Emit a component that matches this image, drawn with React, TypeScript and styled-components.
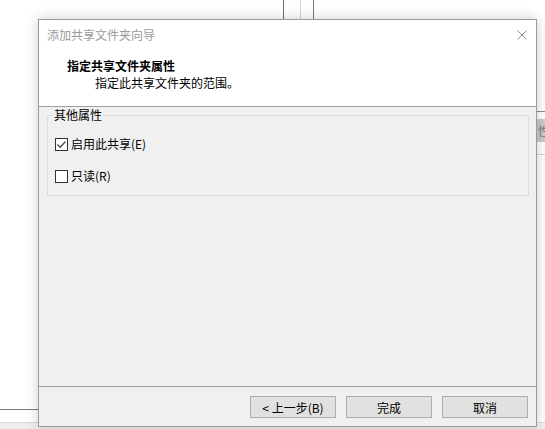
import React from 'react';
import styled, { createGlobalStyle } from 'styled-components';

const GlobalStyle = createGlobalStyle`
  html, body {
    margin: 0;
    padding: 0;
    width: 545px;
    height: 429px;
    overflow: hidden;
    background: #ffffff;
  }
  * {
    box-sizing: border-box;
  }
`;

const FONT = `"Microsoft YaHei UI", "Noto Sans CJK SC", "Noto Sans", sans-serif`;

function CloseIcon(): JSX.Element {
  return (
    <svg width="10" height="10" viewBox="0 0 10 10">
      <path d="M0.5 0.5 L9.5 9.5 M9.5 0.5 L0.5 9.5" stroke="#8a8a8a" strokeWidth="1" fill="none" />
    </svg>
  );
}

function CheckMark(): JSX.Element {
  return (
    <svg width="11" height="11" viewBox="0 0 11 11">
      <path d="M1.5 5.5 L4.2 8.2 L9.5 2.5" stroke="#4a4a4a" strokeWidth="1.3" fill="none" />
    </svg>
  );
}

interface IOptionProps {
  label: string;
  checked?: boolean;
}

function Option({ label, checked }: IOptionProps): JSX.Element {
  return (
    <OptionRow>
      <CheckBox>{checked && <CheckMark />}</CheckBox>
      <OptionLabel>{label}</OptionLabel>
    </OptionRow>
  );
}

function App(): JSX.Element {
  return (
    <Desktop>
      <GlobalStyle />

      {/* window behind the dialog */}
      <TopSplitter $x={283} $tone="#6e6e6e" />
      <TopSplitter $x={300} $tone="#d2d2d2" />
      <TopSplitter $x={313} $tone="#7a7a7a" />
      <LeftRule />
      <BottomStrip />
      <SideRule $y={111} $tone="#8c8c8c" />
      <SideTab>性</SideTab>
      <SideRule $y={154} $tone="#d4d4d4" />

      <Dialog>
        <Header>
          <TitleBar>
            <Title>添加共享文件夹向导</Title>
            <CloseButton>
              <CloseIcon />
            </CloseButton>
          </TitleBar>
          <Heading>指定共享文件夹属性</Heading>
          <SubHeading>指定此共享文件夹的范围。</SubHeading>
        </Header>

        <Body>
          <GroupBox>
            <GroupLegend>其他属性</GroupLegend>
            <OptionList>
              <Option label="启用此共享(E)" checked />
              <Option label="只读(R)" />
            </OptionList>
          </GroupBox>
        </Body>

        <Footer>
          <Button>&lt; 上一步(B)</Button>
          <Button>完成</Button>
          <Button>取消</Button>
        </Footer>
      </Dialog>
    </Desktop>
  );
}

export default App;

const Desktop = styled.div`
  position: relative;
  width: 545px;
  height: 429px;
  overflow: hidden;
  background: #ffffff;
  font-family: ${FONT};
  font-size: 12px;
  color: #000000;
`;

const TopSplitter = styled.div<{ $x: number; $tone: string }>`
  position: absolute;
  top: 0;
  left: ${(p) => p.$x}px;
  width: 1px;
  height: 19px;
  background: ${(p) => p.$tone};
`;

const LeftRule = styled.div`
  position: absolute;
  left: 0;
  top: 409px;
  width: 40px;
  height: 1px;
  background: #7c7c7c;
`;

const BottomStrip = styled.div`
  position: absolute;
  left: 0;
  top: 422px;
  width: 545px;
  height: 7px;
  background: #eeeeee;
  border-top: 1px solid #dadada;
`;

const SideRule = styled.div<{ $y: number; $tone: string }>`
  position: absolute;
  left: 536px;
  top: ${(p) => p.$y}px;
  width: 9px;
  height: 1px;
  background: ${(p) => p.$tone};
`;

const SideTab = styled.div`
  position: absolute;
  left: 536px;
  top: 119px;
  width: 20px;
  height: 23px;
  padding-left: 2px;
  display: flex;
  align-items: center;
  background: #cbcbcb;
  color: #7a7a7a;
  font-size: 12px;
`;

const Dialog = styled.div`
  position: absolute;
  left: 38px;
  top: 19px;
  width: 499px;
  height: 408px;
  display: flex;
  flex-direction: column;
  border: 1px solid #9c9c9c;
  background: #f0f0f0;
  box-shadow: 0 0 12px rgba(0, 0, 0, 0.2);
`;

const Header = styled.div`
  height: 87px;
  flex-shrink: 0;
  background: #ffffff;
  border-bottom: 1px solid #a0a0a0;
`;

const TitleBar = styled.div`
  height: 30px;
  display: flex;
  align-items: center;
  justify-content: space-between;
  padding: 0 9px 0 8px;
`;

const Title = styled.span`
  color: #9a9a9a;
  line-height: 16px;
`;

const CloseButton = styled.div`
  width: 10px;
  height: 10px;
  display: flex;
`;

const Heading = styled.div`
  margin-top: 8px;
  padding-left: 28px;
  line-height: 16px;
  font-weight: bold;
`;

const SubHeading = styled.div`
  margin-top: 1px;
  padding-left: 56px;
  line-height: 16px;
`;

const Body = styled.div`
  flex: 1;
  display: flex;
  flex-direction: column;
`;

const GroupBox = styled.fieldset`
  margin: 1px 7px 0 8px;
  padding: 0;
  border: 1px solid #dcdcdc;
  min-width: 0;
`;

const GroupLegend = styled.legend`
  margin-left: 5px;
  padding: 0 1px;
  line-height: 14px;
  font-size: 12px;
`;

const OptionList = styled.div`
  display: flex;
  flex-direction: column;
  gap: 16px;
  padding: 14px 0 11px 7px;
`;

const OptionRow = styled.div`
  height: 16px;
  display: flex;
  align-items: center;
`;

const CheckBox = styled.span`
  width: 13px;
  height: 13px;
  display: flex;
  align-items: center;
  justify-content: center;
  border: 1px solid #333333;
  background: #ffffff;
`;

const OptionLabel = styled.span`
  margin-left: 3px;
  line-height: 16px;
`;

const Footer = styled.div`
  height: 40px;
  flex-shrink: 0;
  display: flex;
  justify-content: flex-end;
  gap: 10px;
  padding: 9px 8px 8px 0;
  border-top: 1px solid #a0a0a0;
`;

const Button = styled.div`
  width: 86px;
  height: 22px;
  display: flex;
  align-items: center;
  justify-content: center;
  background: #e1e1e1;
  border: 1px solid #adadad;
  font-size: 12px;
`;
